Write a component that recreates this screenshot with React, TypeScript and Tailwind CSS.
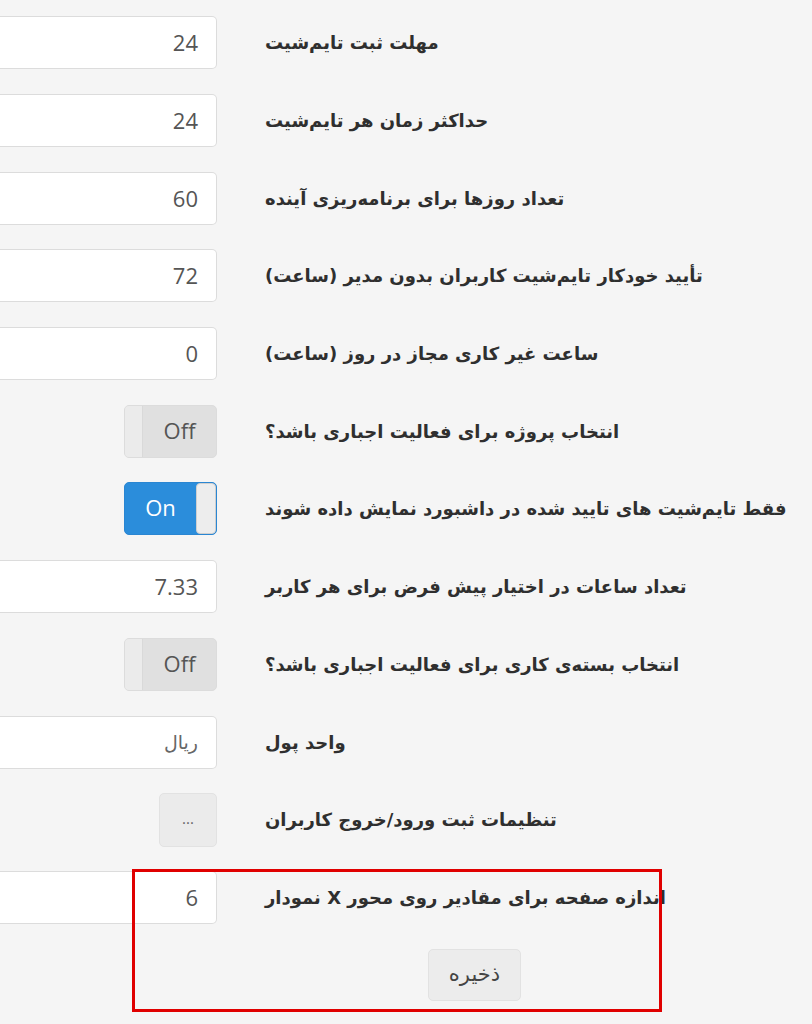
import type { ReactNode } from 'react';

type Row =
  | { kind: 'input'; label: string; value: string }
  | { kind: 'toggle'; label: string; on: boolean }
  | { kind: 'dots'; label: string };

const rows: Row[] = [
  { kind: 'input', label: 'مهلت ثبت تایم‌شیت', value: '24' },
  { kind: 'input', label: 'حداکثر زمان هر تایم‌شیت', value: '24' },
  { kind: 'input', label: 'تعداد روزها برای برنامه‌ریزی آینده', value: '60' },
  { kind: 'input', label: 'تأیید خودکار تایم‌شیت کاربران بدون مدیر (ساعت)', value: '72' },
  { kind: 'input', label: 'ساعت غیر کاری مجاز در روز (ساعت)', value: '0' },
  { kind: 'toggle', label: 'انتخاب پروژه برای فعالیت اجباری باشد؟', on: false },
  { kind: 'toggle', label: 'فقط تایم‌شیت های تایید شده در  داشبورد نمایش داده شوند', on: true },
  { kind: 'input', label: 'تعداد ساعات در اختیار پیش فرض برای هر کاربر', value: '7.33' },
  { kind: 'toggle', label: 'انتخاب بسته‌ی کاری برای فعالیت اجباری باشد؟', on: false },
  { kind: 'input', label: 'واحد پول', value: 'ریال' },
  { kind: 'dots', label: 'تنظیمات ثبت ورود/خروج کاربران' },
  { kind: 'input', label: 'اندازه صفحه برای مقادیر روی محور X نمودار', value: '6' },
];

const faFont = "font-['DejaVu_Sans',sans-serif]";

function Control({ row }: { row: Row }): ReactNode {
  if (row.kind === 'input') {
    const isText = row.value === 'ریال';
    return (
      <div
        dir="rtl"
        className={`w-[217px] h-[53px] bg-white border border-l-0 border-[#dcdcdc] rounded-r-[5px] flex items-center pr-[18px] text-[#555] ${
          isText ? "text-[19px] font-['DejaVu_Sans',sans-serif] text-[#666]" : "text-[22px] font-['Open_Sans',sans-serif]"
        }`}
      >
        {row.value}
      </div>
    );
  }
  if (row.kind === 'toggle') {
    return row.on ? (
      <div className="w-[93px] h-[53px] rounded-[5px] border border-[#2a86d2] bg-[#2b8ddb] flex overflow-hidden">
        <div className="flex-1 flex items-center justify-center text-white text-[22px] font-['Open_Sans',sans-serif] pb-[2px]">
          On
        </div>
        <div className="w-[20px] bg-[#ededed] rounded-[4px] border border-[#cfcfcf]" />
      </div>
    ) : (
      <div className="w-[93px] h-[53px] rounded-[5px] border border-[#dcdcdc] bg-[#e0e0e0] flex overflow-hidden">
        <div className="w-[18px] bg-[#ebebeb] border-r border-[#d9d9d9]" />
        <div className="flex-1 flex items-center justify-center text-[#555] text-[22px] font-['Open_Sans',sans-serif] pb-[2px]">
          Off
        </div>
      </div>
    );
  }
  return (
    <div className="w-[58px] h-[54px] rounded-[5px] border border-[#e2e2e2] bg-[#ebebeb] flex items-center justify-center text-[#666] text-[15px] font-['Open_Sans',sans-serif] pb-[2px]">
      ...
    </div>
  );
}

export default function App() {
  return (
    <div className="relative w-[812px] h-[1024px] bg-[#f5f5f5] overflow-hidden pt-[4px]">
      {rows.map((row, i) => (
        <div key={i} className="h-[77.7px] flex items-center">
          <div className="w-[217px] flex justify-end shrink-0">
            <Control row={row} />
          </div>
          <div
            dir="rtl"
            className={`ml-[48px] text-[18px] font-bold text-[#2f2f2f] whitespace-nowrap ${faFont}`}
          >
            {row.label}
          </div>
        </div>
      ))}
      <div className="h-[77.7px] flex items-center pl-[428px]">
        <button
          className={`w-[93px] h-[52px] rounded-[5px] border border-[#e2e2e2] bg-[#ececec] text-[#444] text-[21px] ${faFont}`}
        >
          ذخیره
        </button>
      </div>
      <div className="absolute left-[132px] top-[869px] w-[530px] h-[143px] border-[3px] border-[#e00000] pointer-events-none" />
    </div>
  );
}
